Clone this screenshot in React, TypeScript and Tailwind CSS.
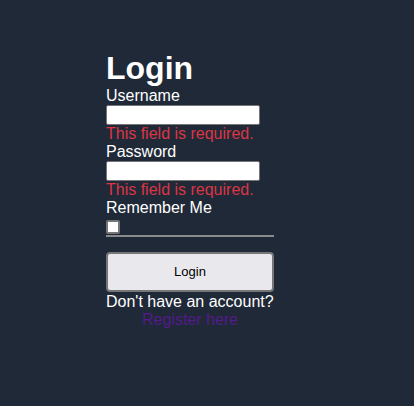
import React from "react";

export default function App() {
  return (
    <div className="w-[414px] h-[406px] bg-[#1f2937] text-white" style={{ fontFamily: '"Liberation Sans", Arial, sans-serif' }}>
      <div className="pt-[49px] ml-[106px] w-[168px] flex flex-col">
        <h1 className="text-[32px] font-bold leading-[38px] m-0">Login</h1>
        <label className="text-[16px] leading-[18px]">Username</label>
        <input className="w-[154px] h-[20px] bg-white border border-[#767676] rounded-[2px] outline-none" />
        <div className="text-[16px] leading-[18px] text-[#dc3545]">This field is required.</div>
        <label className="text-[16px] leading-[18px]">Password</label>
        <input type="password" className="w-[154px] h-[20px] bg-white border border-[#767676] rounded-[2px] outline-none" />
        <div className="text-[16px] leading-[18px] text-[#dc3545]">This field is required.</div>
        <label className="text-[16px] leading-[18px]">Remember Me</label>
        <div className="mt-[3px] w-[14px] h-[14px] bg-white border-2 border-[#767676] rounded-[2px]" />
        <div className="h-[2px] bg-[#8a8a8a] mt-[1px]" />
        <button className="mt-[15px] h-[40px] w-full bg-[#e9e9ed] border-2 border-[#767676] rounded-[4px] text-black text-[13px]">Login</button>
        <div className="text-[16px] leading-[18px] mt-[1px]">Don't have an account?</div>
        <a className="text-[16px] leading-[18px] text-[#551a8b] text-center">Register here</a>
      </div>
    </div>
  );
}
